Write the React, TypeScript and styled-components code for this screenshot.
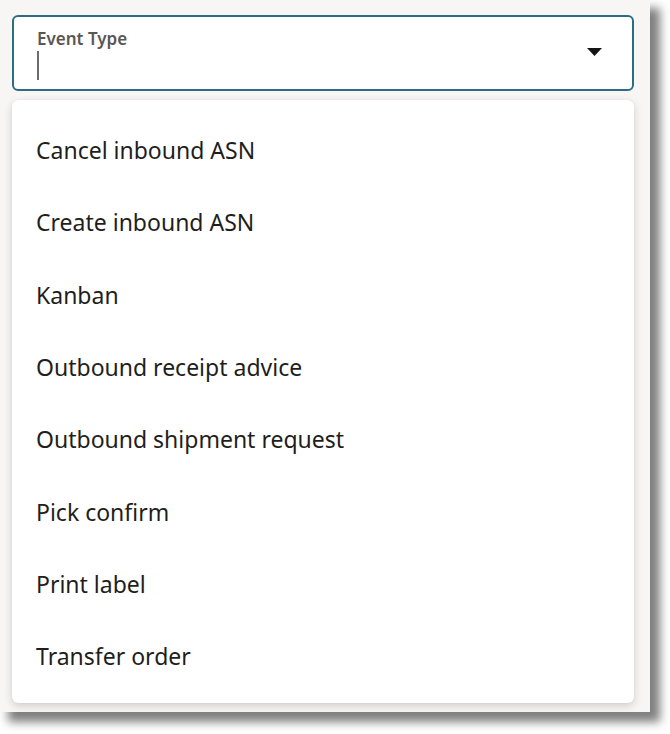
import React from 'react'
import styled, { createGlobalStyle } from 'styled-components'

const GlobalStyle = createGlobalStyle`
  html, body {
    margin: 0;
    padding: 0;
    background: #ffffff;
  }
  body {
    font-family: 'Noto Sans', 'Open Sans', sans-serif;
  }
`

const Page = styled.div`
  min-height: 734px;
  padding-bottom: 22px;
  box-sizing: border-box;
`

const Frame = styled.div`
  width: 650px;
  height: 712px;
  box-sizing: border-box;
  background: #f7f6f4;
  padding: 15px 16px 9px 12px;
  display: flex;
  flex-direction: column;
  gap: 9px;
  box-shadow: 9px 9px 9px 1px rgba(0, 0, 0, 0.5);
`

const Field = styled.div`
  height: 76px;
  box-sizing: border-box;
  border: 2px solid #2b6d84;
  border-radius: 6px;
  background: #ffffff;
  display: flex;
  align-items: center;
  padding: 0 30px 0 23px;
`

const FieldBody = styled.div`
  flex: 1;
  display: flex;
  flex-direction: column;
  gap: 2px;
  margin-top: 2px;
`

const Label = styled.span`
  font-size: 17px;
  font-weight: 600;
  color: #5a5754;
  line-height: 20px;
`

const Cursor = styled.span`
  width: 1.5px;
  height: 29px;
  background: #6f6c69;
`

const Caret = styled.svg`
  width: 15px;
  height: 8px;
  margin-top: -2px;
`

const Menu = styled.ul`
  list-style: none;
  margin: 0;
  padding: 14px 0 0;
  flex: 1;
  background: #ffffff;
  border-radius: 6px;
  box-shadow: 0 3px 8px rgba(0, 0, 0, 0.16), 0 0 1px rgba(0, 0, 0, 0.12);
`

const Item = styled.li`
  height: 72.3px;
  display: flex;
  align-items: center;
  padding-left: 24px;
  font-size: 23px;
  color: #1f1e1c;
`

const EVENT_TYPES = [
  'Cancel inbound ASN',
  'Create inbound ASN',
  'Kanban',
  'Outbound receipt advice',
  'Outbound shipment request',
  'Pick confirm',
  'Print label',
  'Transfer order'
]

export default function App() {
  return (
    <Page>
      <GlobalStyle />
      <Frame>
        <Field>
          <FieldBody>
            <Label>Event Type</Label>
            <Cursor />
          </FieldBody>
          <Caret viewBox="0 0 15 8">
            <path d="M0 0 H15 L7.5 8 Z" fill="#161513" />
          </Caret>
        </Field>
        <Menu>
          {EVENT_TYPES.map(t => (
            <Item key={t}>{t}</Item>
          ))}
        </Menu>
      </Frame>
    </Page>
  )
}
